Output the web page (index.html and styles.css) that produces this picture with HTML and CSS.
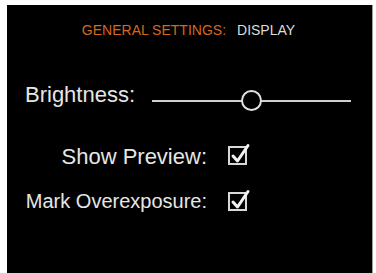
FILE: index.html
```
<!DOCTYPE html>
<html>
<head>
<meta charset="utf-8">
<link rel="stylesheet" href="styles.css">
</head>
<body>
<div class="panel">
  <div class="header"><span class="section">GENERAL SETTINGS:</span><span class="page">DISPLAY</span></div>
  <div class="row bright">
    <span class="blabel">Brightness:</span>
    <div class="slider">
      <div class="track"></div>
      <div class="thumb"></div>
    </div>
  </div>
  <div class="row check-row preview">
    <div class="label">Show Preview:</div>
    <svg class="box" width="24" height="24" viewBox="0 0 24 24"><rect x="1" y="3" width="17" height="17" fill="none" stroke="#d8d8d8" stroke-width="2"/><path d="M5 12 L9.5 17 L20 1.5" fill="none" stroke="#f2f2f2" stroke-width="3" stroke-linecap="round" stroke-linejoin="round"/></svg>
  </div>
  <div class="row check-row mark">
    <div class="label">Mark Overexposure:</div>
    <svg class="box" width="24" height="24" viewBox="0 0 24 24"><rect x="1" y="3" width="17" height="17" fill="none" stroke="#d8d8d8" stroke-width="2"/><path d="M5 12 L9.5 17 L20 1.5" fill="none" stroke="#f2f2f2" stroke-width="3" stroke-linecap="round" stroke-linejoin="round"/></svg>
  </div>
</div>
</body>
</html>
```
FILE: styles.css
```
html, body {
  margin: 0;
  padding: 0;
  background: #fff;
  height: 100%;
  overflow: hidden;
}
body {
  padding: 5px 0 0 7px;
  box-sizing: border-box;
  font-family: "Liberation Sans", Arial, sans-serif;
}
.panel {
  width: 366px;
  height: 268px;
  background: #000;
  border-right: 1px solid #9a9a9a;
  box-sizing: border-box;
  padding: 17px 21px 0 18px;
  color: #e6e6e6;
}
.header {
  font-size: 14px;
  line-height: 16px;
  text-align: center;
  padding-left: 1px;
}
.section {
  color: #d2691e;
}
.page {
  color: #dcdcdc;
  margin-left: 11px;
}
.row {
  display: flex;
  align-items: flex-start;
}
.bright {
  margin-top: 45px;
  height: 30px;
}
.blabel {
  font-size: 22px;
  line-height: 24px;
  white-space: nowrap;
}
.slider {
  position: relative;
  margin-left: auto;
  margin-top: 7px;
  width: 199px;
  height: 21px;
}
.track {
  position: absolute;
  left: 0;
  right: 0;
  top: 10px;
  height: 2px;
  background: #cfcfcf;
}
.thumb {
  position: absolute;
  left: 89px;
  top: 0;
  width: 17px;
  height: 17px;
  border: 2px solid #e0e0e0;
  border-radius: 50%;
  background: #000;
}
.check-row .label {
  width: 182px;
  display: flex;
  justify-content: flex-end;
  white-space: nowrap;
  line-height: 24px;
}
.preview {
  margin-top: 32px;
}
.preview .label {
  font-size: 22px;
}
.mark {
  margin-top: 20px;
}
.mark .label {
  font-size: 20px;
}
.box {
  margin-left: 21px;
  overflow: visible;
}
.preview .box {
  margin-top: -1px;
}
.mark .box {
  margin-top: 1px;
}
```
